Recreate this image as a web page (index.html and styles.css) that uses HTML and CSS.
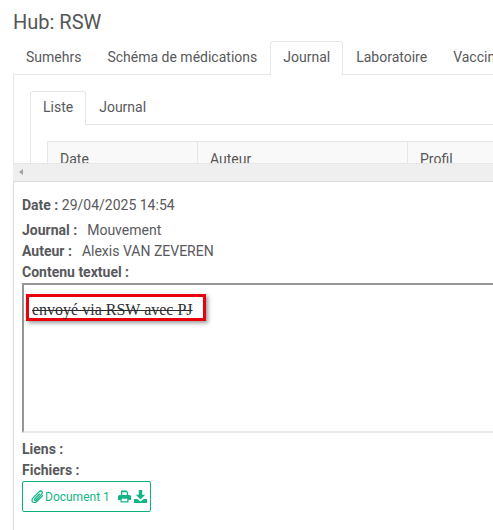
FILE: index.html
```html
<!DOCTYPE html>
<html lang="fr">
<head>
<meta charset="utf-8">
<title>Hub: RSW</title>
<link rel="stylesheet" href="styles.css">
</head>
<body>
<div class="page">
  <h1 class="title">Hub: RSW</h1>
  <div class="tabs main-tabs">
    <span class="tab">Sumehrs</span>
    <span class="tab">Schéma de médications</span>
    <span class="tab active">Journal</span>
    <span class="tab">Laboratoire</span>
    <span class="tab">Vaccinations</span>
  </div>
  <div class="outer-box">
    <div class="tabs inner-tabs">
      <span class="tab active">Liste</span>
      <span class="tab">Journal</span>
    </div>
    <div class="inner-box">
      <div class="table-head">
        <span class="cell c-date">Date</span>
        <span class="cell c-auteur">Auteur</span>
        <span class="cell c-profil">Profil</span>
      </div>
    </div>
  </div>
  <div class="scrollbar"><span class="arrow"></span></div>
  <div class="detail">
    <p class="line date-line"><b>Date :</b> 29/04/2025 14:54</p>
    <p class="line journal-line"><b>Journal :</b><span class="val">Mouvement</span></p>
    <p class="line"><b>Auteur :</b><span class="val">Alexis VAN ZEVEREN</span></p>
    <p class="line"><b>Contenu textuel :</b></p>
    <div class="textbox">
      <span class="highlight"><s>envoyé via RSW avec PJ</s></span>
    </div>
    <p class="line liens"><b>Liens :</b></p>
    <p class="line"><b>Fichiers :</b></p>
    <div class="doc-btn">
      <svg class="ic clip" viewBox="0 0 14 14"><path d="M12.8 5.800 6.200 12.400c-1.400 1.400-3.300 1.500-4.400.4s-1-3 .4-4.300l6.400-6.500c1-1 2.200-1.100 3-.3s.7 2-.3 3L5.600 10.800c-.5.5-1.200.6-1.600.2s-.3-1.100.2-1.600l5.200-5.300" fill="none" stroke="currentColor" stroke-width="1.400"/></svg>
      <span class="doc-name">Document 1</span>
      <svg class="ic print" viewBox="0 0 13 13"><path d="M3 .5h5.500L10 2v3H8.800V2.300H4.200V5H3zM1.500 5h10A1.500 1.500 0 0 1 13 6.500V10h-2.500v2.500h-8V10H0V6.500A1.500 1.500 0 0 1 1.500 5zM3.700 8.700v2.600h5.600V8.700z" fill="currentColor" fill-rule="evenodd"/></svg>
      <svg class="ic down" viewBox="0 0 13 13"><path d="M4.800 0h3.400v4.800h3L6.500 9.500 1.800 4.800h3zM0 9h3.300l3.200 2.400L9.700 9H13v4H0z" fill="currentColor"/></svg>
    </div>
  </div>
</div>
</body>
</html>
```
FILE: styles.css
```css
* { box-sizing: border-box; }
html, body { margin: 0; height: 100%; overflow: hidden; background: #fff; }
body { font-family: Roboto, "Liberation Sans", sans-serif; font-size: 14px; color: #58595c; }
.page { width: 493px; padding-left: 13px; overflow: hidden; }
.title { margin: 0; height: 41px; padding-top: 10px; font-size: 20px; font-weight: 400; line-height: 24px; color: #555; }
.tabs { display: flex; height: 34px; border-bottom: 1px solid #e6e6e6; }
.tab { padding: 0 13px; height: 34px; line-height: 30px; border: 1px solid transparent; border-bottom: 0; white-space: nowrap; }
.tab.active { background: #fff; border-color: #e6e6e6; border-radius: 3px 3px 0 0; height: 34px; }
.main-tabs .tab { padding: 0 12px; }
.outer-box { height: 89px; margin-bottom: -1px; overflow: hidden; border-left: 1px solid #e6e6e6; border-radius: 0 0 0 3px; padding: 16px 0 0 16px; }
.inner-tabs .tab { padding: 0 12px; }
.inner-box { border-left: 1px solid #e6e6e6; padding: 16px 0 0 16px; }
.table-head { display: flex; height: 40px; background: #f9f9f9; border: 1px solid #e6e6e6; border-width: 1px 0 0 1px; }
.cell { padding: 9px 12px; line-height: 16px; color: #555; border-left: 1px solid #e6e6e6; }
.cell:first-child { border-left: 0; padding-left: 12px; }
.c-date { width: 149px; }
.c-auteur { width: 210px; }
.c-profil { flex: 1; }
.scrollbar { position: relative; height: 19px; background: #efefef; border-bottom: 1px solid #dcdcdc; border-top: 1px solid #e6e6e6; padding: 5px 0 0 6px; }
.arrow { display: block; width: 0; height: 0; border-style: solid; border-width: 3.500px 4px 3.500px 0; border-color: transparent #a3a3a3 transparent transparent; }
.detail { border-left: 1px solid #dcdcdc; padding: 14px 0 0 8px; height: 349px; }
.line { margin: 0; height: 21px; line-height: 21px; }
.line b { font-weight: 700; }
.date-line { height: 24px; line-height: 18px; }
.val { margin-left: 10px; }
.textbox { height: 150px; border-style: solid; border-width: 2px 0 2px 2px; border-color: #969696 #eee #eaeaea #969696; padding: 9px 0 0 2px; }
.highlight { display: inline-block; width: 180px; height: 27px; border: 3px solid #e8000d; box-shadow: 2px 2px 4px rgba(70, 70, 70, .55); padding-left: 3px; line-height: 25px; font-family: "Liberation Serif", serif; font-size: 16px; color: #2e2e2e; white-space: nowrap; }
.liens { margin-top: 6px; }
.doc-btn { display: flex; align-items: center; width: 129px; height: 31px; border: 1px solid #0bb07e; border-radius: 2px; padding-left: 8px; color: #12b585; font-size: 12px; }
.ic { display: block; flex: none; width: 13px; height: 13px; }
.doc-name { margin-left: 1px; }
.print { margin-left: 8px; }
.down { margin-left: 3px; }
```
